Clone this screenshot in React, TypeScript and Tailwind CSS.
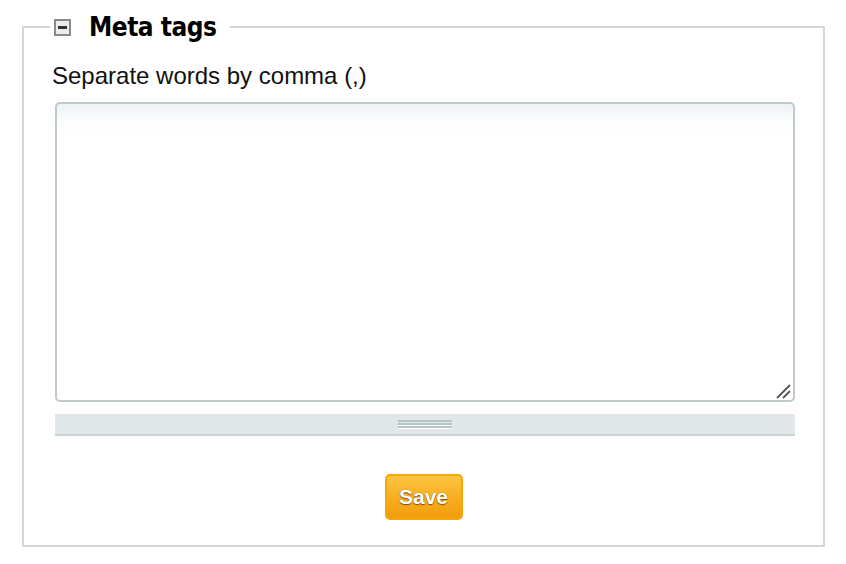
import React from "react";

function CollapseIcon() {
  return (
    <span className="flex h-[17px] w-[17px] items-center justify-center border-2 border-[#8a8a8a] bg-[#ececec]">
      <span className="h-[3px] w-[9px] bg-[#333]" />
    </span>
  );
}

export default function App() {
  return (
    <div className="min-h-[564px] w-[846px] bg-white pl-[22px] pt-[10px] font-['Liberation_Sans',Arial,sans-serif]">
      <fieldset className="m-0 w-[802px] border-2 border-[#d6d6d6] px-0 pb-[25px] pt-0">
        <legend className="ml-[26px] flex items-center gap-[18px] px-[4px]">
          <CollapseIcon />
          <span className="pr-[10px] font-['DejaVu_Sans_Condensed','DejaVu_Sans',sans-serif] text-[26px] font-bold leading-[34px] tracking-[-0.5px] text-black">
            Meta tags
          </span>
        </legend>

        <div className="px-[28px] pt-[18px]">
          <label className="block text-[24px] leading-[28px] text-[#111]">
            Separate words by comma (,)
          </label>

          <div className="ml-[3px] mt-[12px]">
            <div className="relative">
              <textarea className="block h-[300px] w-[740px] resize-none rounded-[5px] border-2 border-[#bfcbcb] bg-[linear-gradient(to_bottom,#eef2f5_0px,#fbfcfd_16px,#ffffff_30px)] p-2 text-[15px] outline-none" />
              <svg
                className="pointer-events-none absolute bottom-[3px] right-[4px]"
                width="15"
                height="15"
                viewBox="0 0 15 15"
              >
                <path d="M1 14 L14 1" stroke="#555" strokeWidth="1.8" />
                <path d="M7 14 L14 7" stroke="#555" strokeWidth="1.8" />
              </svg>
            </div>
            <div className="mt-[12px] flex h-[22px] w-[740px] items-center justify-center border-b-2 border-[#c9d3d3] bg-[#e2e8e9]">
              <div className="flex w-[54px] flex-col">
                <span className="h-[2px] bg-[#b3c5c5]" />
                <span className="h-[1px] bg-[#e2e8e9]" />
                <span className="h-[2px] bg-[#b3c5c5]" />
                <span className="h-[1px] bg-white" />
                <span className="h-[2px] bg-[#b3c5c5]" />
                <span className="h-[1px] bg-white" />
              </div>
            </div>
          </div>

          <div className="mt-[38px] flex justify-center">
            <button className="h-[46px] w-[78px] rounded-[5px] border-2 border-[#f6a80a] bg-[linear-gradient(to_bottom,#fdc441,#f7ab1c_60%,#f29d0d)] text-[21px] font-bold text-white [text-shadow:0_1px_1px_#7a4f00,0_0_1px_#9a6500]">
              Save
            </button>
          </div>
        </div>
      </fieldset>
    </div>
  );
}
